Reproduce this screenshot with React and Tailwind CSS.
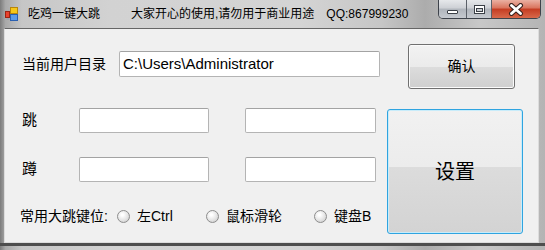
import React from 'react';

const AppIcon = () => (
  <svg width="16" height="16" viewBox="0 0 16 16" className="block">
    <rect x="6.5" y="1.5" width="7" height="6" fill="#f6c81a" stroke="#b8860b" />
    <rect x="1.5" y="5.5" width="4" height="6" fill="#e8412c" stroke="#9c2412" />
    <rect x="6.5" y="8.5" width="7" height="6" fill="#5b9bea" stroke="#2a5fb0" />
    <rect x="2.5" y="12" width="3" height="2" fill="#9aa3ad" />
  </svg>
);

const TitleButtons = () => (
  <div className="ml-auto mr-[4px] flex h-[19px] rounded-b-[5px] border border-t-0 border-[#3e434b] overflow-hidden">
    <div className="w-[28px] h-full flex items-end justify-center pb-[4px] border-r border-[#5b6068] bg-[linear-gradient(to_bottom,#e6e8eb_0%,#cdd0d5_45%,#b0b5bc_50%,#c5c9cf_100%)]">
      <div className="w-[11px] h-[4px] bg-white border border-[#3a3f46] rounded-[1px]" />
    </div>
    <div className="w-[25px] h-full flex items-center justify-center border-r border-[#5b6068] bg-[linear-gradient(to_bottom,#e6e8eb_0%,#cdd0d5_45%,#b0b5bc_50%,#c5c9cf_100%)]">
      <div className="w-[11px] h-[9px] border border-[#3a3f46] bg-white flex items-center justify-center">
        <div className="w-[7px] h-[4px] mt-[1px] border border-[#3a3f46] bg-[#c9cdd2]" />
      </div>
    </div>
    <div className="w-[48px] h-full flex items-center justify-center bg-[linear-gradient(to_bottom,#eab0a2_0%,#d9735c_45%,#c43c22_50%,#d8694b_100%)]">
      <svg width="16" height="13" viewBox="0 0 16 13">
        <path d="M3.5 2.5 L12.5 10.5 M12.5 2.5 L3.5 10.5" stroke="#3b2420" strokeWidth="5" strokeLinecap="round" />
        <path d="M3.5 2.5 L12.5 10.5 M12.5 2.5 L3.5 10.5" stroke="#ffffff" strokeWidth="2.8" strokeLinecap="round" />
      </svg>
    </div>
  </div>
);

const TextBox = ({ className, children }) => (
  <div className={`bg-white border border-[#b4b4b4] border-t-[#a3a3a3] rounded-[2px] flex items-center pl-[3px] text-[15px] text-black ${ className }`}>
    { children }
  </div>
);

const Radio = ({ label, className }) => (
  <div className={`flex items-center ${ className }`}>
    <div className="w-[13px] h-[13px] rounded-full border border-[#8d8d8d] bg-[radial-gradient(circle_at_40%_35%,#ffffff_10%,#e4e4e4_55%,#c4c4c4_100%)]" />
    <span className="ml-[7px]">{ label }</span>
  </div>
);

export default function App() {
  return (
    <div className="w-[545px] h-[250px] overflow-hidden font-['Liberation_Sans','Noto_Sans_CJK_SC',sans-serif] text-black bg-[linear-gradient(to_right,#7c7c7c_0%,#a9a9a9_1%,#c6c6c6_4%,#d2d2d2_20%,#d4d4d4_55%,#c6c6c6_70%,#acacac_78%,#c8c8c8_88%,#b4b4b4_100%)]">
      {/* title bar */}
      <div className="h-[28px] flex items-start">
        <div className="ml-[4px] mt-[6px]"><AppIcon /></div>
        <div className="ml-[8px] mt-[6px] text-[12px] leading-[16px] whitespace-nowrap">吃鸡一键大跳</div>
        <div className="ml-[31px] mt-[6px] text-[12px] leading-[16px] whitespace-nowrap">大家开心的使用,请勿用于商业用途</div>
        <div className="ml-[12px] mt-[6px] text-[12px] leading-[16px] whitespace-nowrap">QQ:867999230</div>
        <TitleButtons />
      </div>

      {/* client area */}
      <div className="ml-[4px] w-[535px] h-[215px] bg-[#f0f0f0] border border-[#dcdcdc] border-t-[#666666] pt-[15px] pl-[17px]">
        <div className="flex items-start">
          <div className="mt-[7px] flex items-center h-[26px]">
            <div className="w-[97px] text-[14px]">当前用户目录</div>
            <TextBox className="w-[261px] h-[26px]">{ "C:\\Users\\Administrator" }</TextBox>
          </div>
          <button className="ml-[28px] w-[107px] h-[45px] rounded-[3px] border border-[#707070] text-[14px] shadow-[inset_0_0_0_1px_#fbfbfb] bg-[linear-gradient(to_bottom,#f2f2f2_0%,#ebebeb_50%,#dddddd_50%,#cfcfcf_100%)]">
            确认
          </button>
        </div>

        <div className="mt-[19px] flex items-start">
          <div className="w-[354px]">
            <div className="flex items-center h-[25px]">
              <div className="w-[57px] text-[15px]">跳</div>
              <TextBox className="w-[130px] h-[25px]" />
              <TextBox className="ml-[36px] w-[131px] h-[25px]" />
            </div>
            <div className="mt-[24px] flex items-center h-[25px]">
              <div className="w-[57px] text-[15px]">蹲</div>
              <TextBox className="w-[130px] h-[25px]" />
              <TextBox className="ml-[36px] w-[131px] h-[25px]" />
            </div>
            <div className="mt-[26px] -ml-[2px] flex items-center h-[16px] text-[14px] whitespace-nowrap">
              <div className="w-[97px]">常用大跳键位:</div>
              <Radio label="左Ctrl" className="w-[89px]" />
              <Radio label="鼠标滑轮" className="w-[108px]" />
              <Radio label="键盘B" />
            </div>
          </div>
          <button className="ml-[11px] mt-[1px] w-[136px] h-[125px] rounded-[3px] border border-[#2fa4e0] text-[20px] shadow-[inset_0_0_0_1px_#c8ecfa] bg-[linear-gradient(to_bottom,#f1f1f1_0%,#ececec_46%,#dcdcdc_46%,#d3d3d3_100%)]">
            设置
          </button>
        </div>
      </div>

      {/* bottom frame */}
      <div className="h-[3px] bg-[#4e4e4e]" />
    </div>
  );
}
